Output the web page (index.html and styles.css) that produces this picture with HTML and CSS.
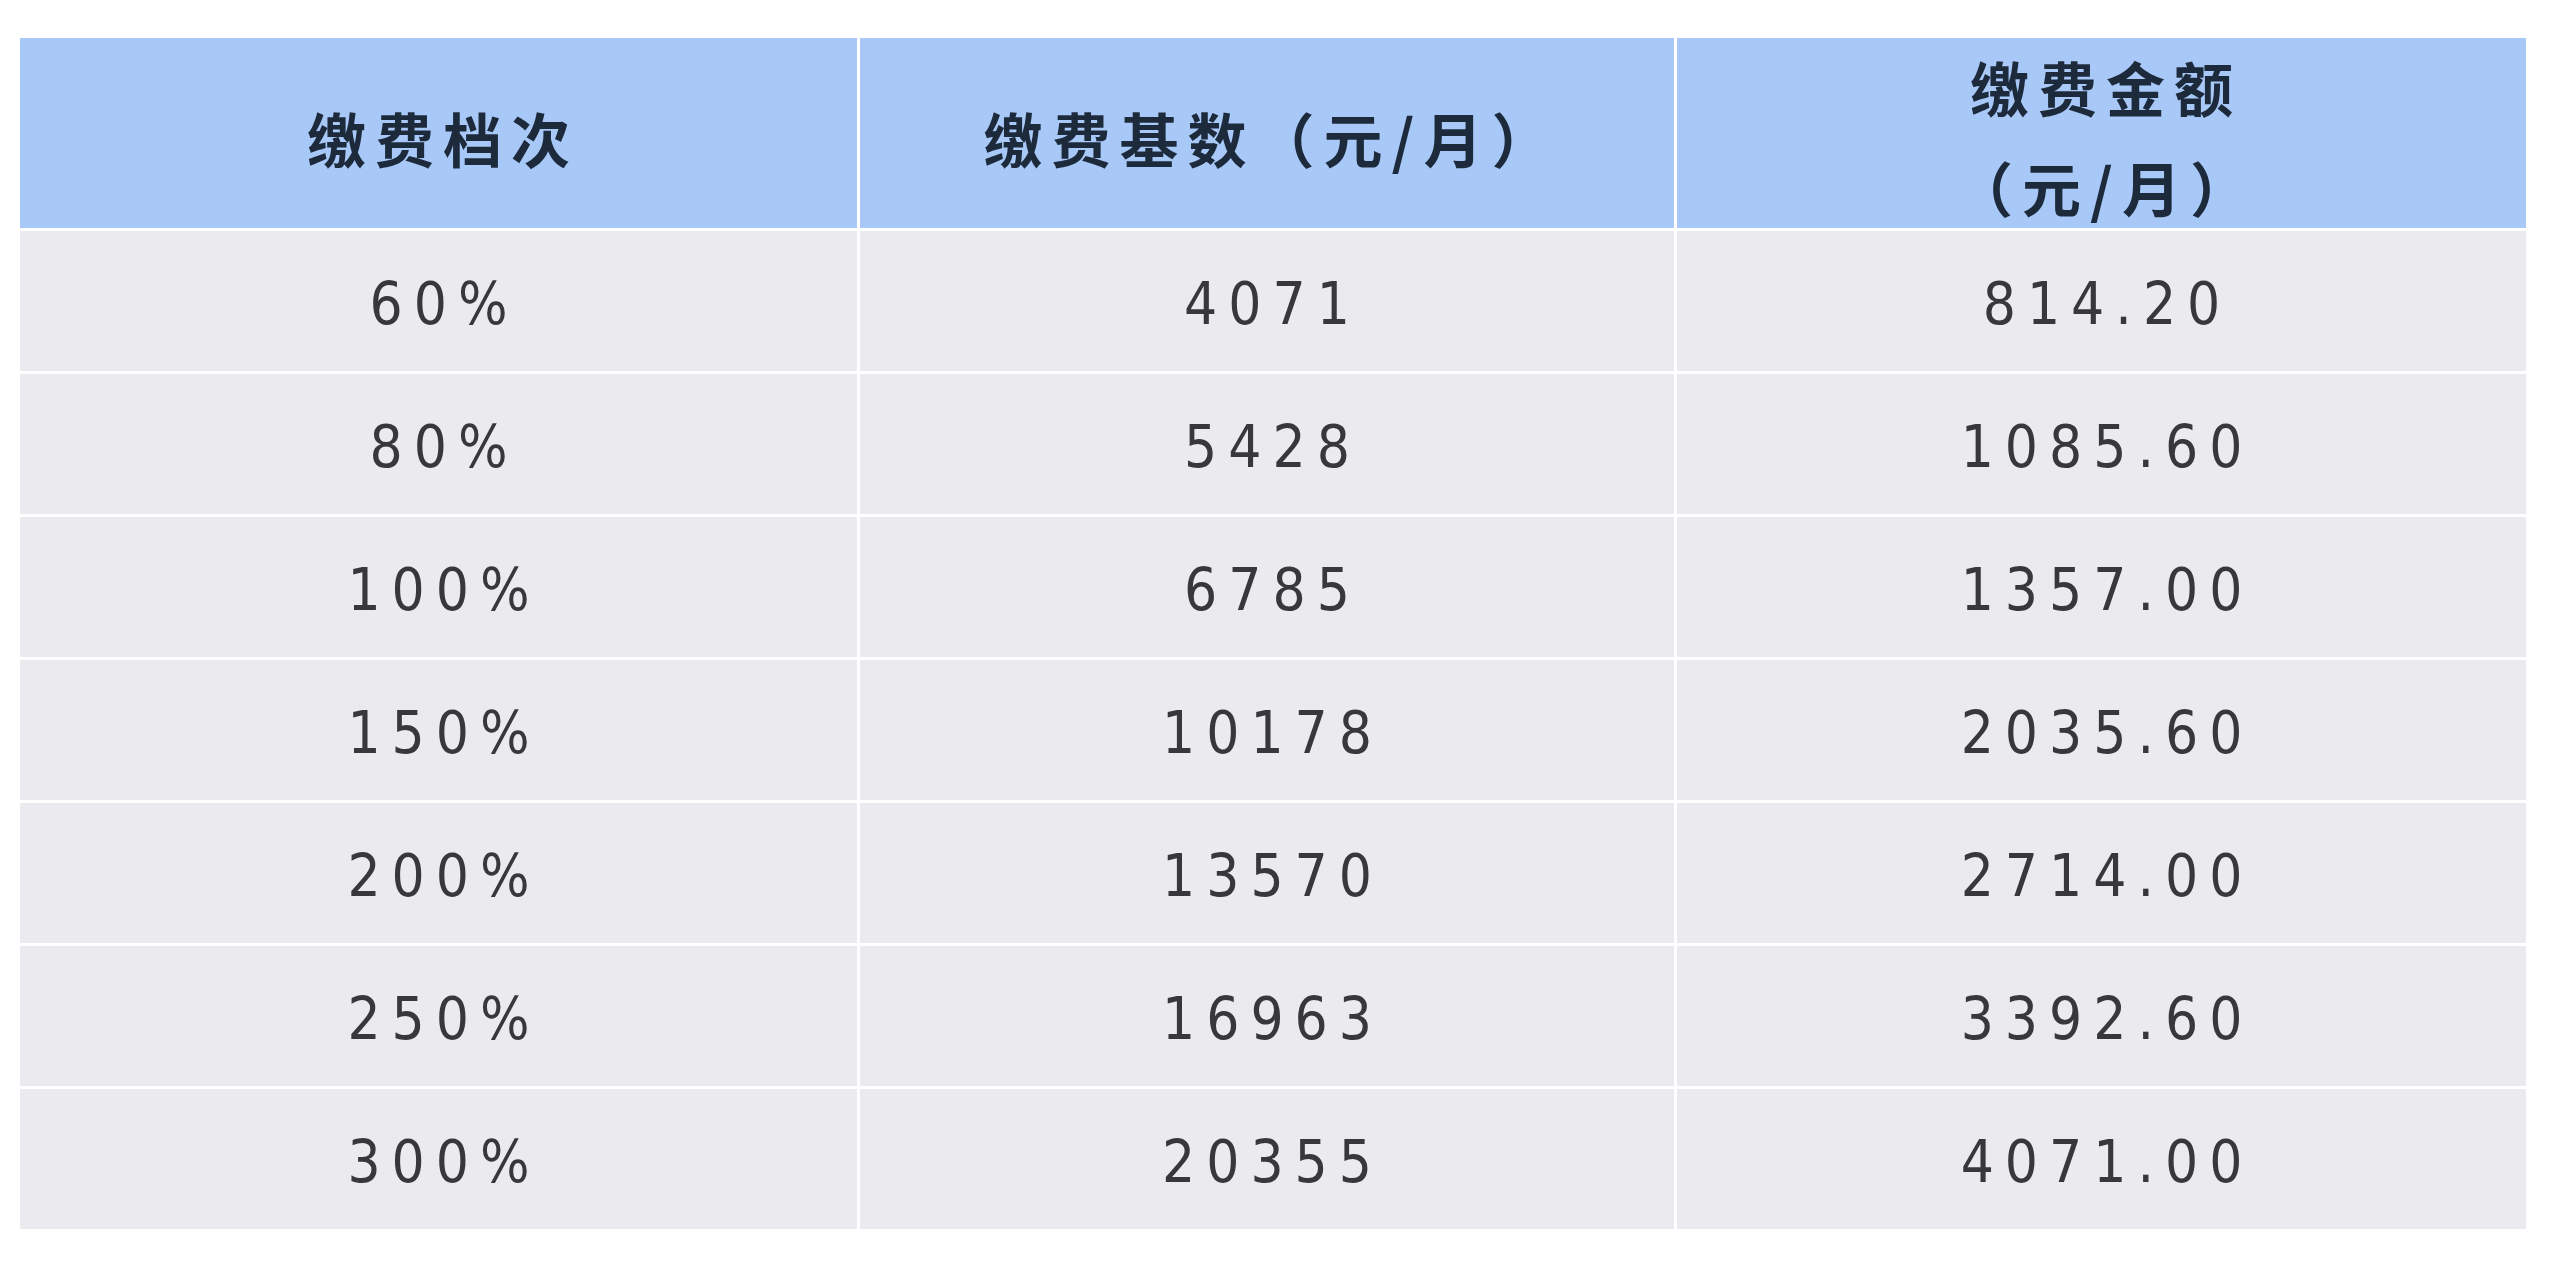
FILE: index.html
```html
<!DOCTYPE html>
<html lang="zh-CN">
<head>
<meta charset="utf-8">
<title>缴费档次</title>
<link rel="stylesheet" href="styles.css">
</head>
<body>
<div class="page">
  <div class="table">
    <div class="cell head">缴费档次</div>
    <div class="cell head">缴费基数（元/月）</div>
    <div class="cell head two"><span>缴费金额</span><span>（元/月）</span></div>

    <div class="cell">60%</div><div class="cell">4071</div><div class="cell">814.20</div>
    <div class="cell">80%</div><div class="cell">5428</div><div class="cell">1085.60</div>
    <div class="cell">100%</div><div class="cell">6785</div><div class="cell">1357.00</div>
    <div class="cell">150%</div><div class="cell">10178</div><div class="cell">2035.60</div>
    <div class="cell">200%</div><div class="cell">13570</div><div class="cell">2714.00</div>
    <div class="cell">250%</div><div class="cell">16963</div><div class="cell">3392.60</div>
    <div class="cell">300%</div><div class="cell">20355</div><div class="cell">4071.00</div>
  </div>
</div>
</body>
</html>
```

FILE: styles.css
```css
html, body {
  margin: 0;
  padding: 0;
  background: #ffffff;
}

.page {
  padding: 38px 0 0 20px;
}

.table {
  width: 2506px;
  display: grid;
  grid-template-columns: 837px 814px 849px;
  grid-template-rows: 190px repeat(7, 140px);
  gap: 3px;
  background: #ffffff;
}

.cell {
  background: #ebeaee;
  display: flex;
  align-items: center;
  justify-content: center;
  font-family: "DejaVu Sans Condensed", "DejaVu Sans", sans-serif;
  font-stretch: condensed;
  font-size: 58px;
  letter-spacing: 11px;
  color: #38383a;
  padding: 6px 0 0 11px;
  box-sizing: border-box;
}

.head {
  background: #a8c8f7;
  font-family: "Noto Sans CJK SC", "Noto Sans", sans-serif;
  font-stretch: normal;
  font-weight: 700;
  font-size: 59px;
  letter-spacing: 9px;
  color: #1c2a3b;
  padding: 8px 0 0 9px;
}

.head.two {
  flex-direction: column;
  line-height: 100px;
}
```
